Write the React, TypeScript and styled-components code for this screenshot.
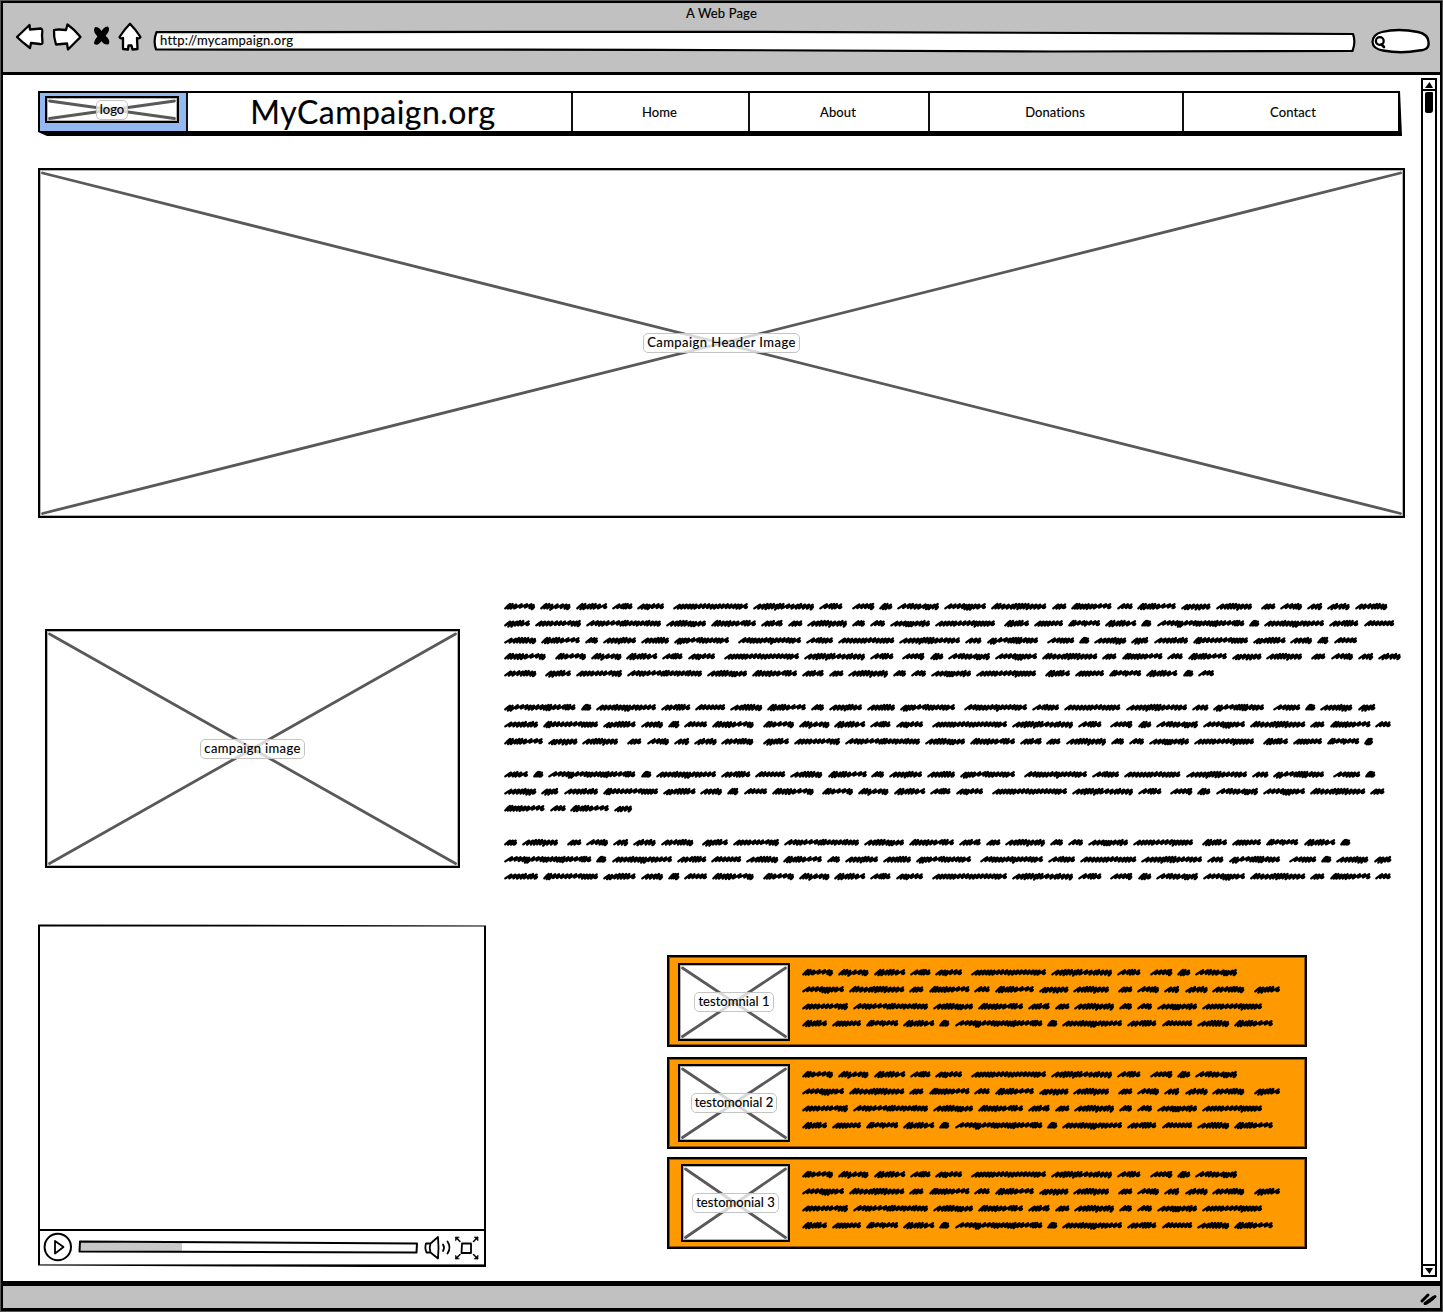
import React from "react";
import styled, { createGlobalStyle } from "styled-components";

const Global = createGlobalStyle`
  *, *::before, *::after { box-sizing: border-box; }
  body { margin: 0; background: #fff; color: #000; font-family: Lato, "Open Sans", sans-serif; -webkit-text-stroke: 0.15px #000; }
  svg { display: block; overflow: visible; flex: none; }
`;

/* ---------- browser window ---------- */

const Window = styled.div`
  width: 1443px;
  height: 1312px;
  padding: 1px;
  background: #555;
`;
const Frame = styled.div`
  height: 1310px;
  display: flex;
  flex-direction: column;
  border: 2px solid #000;
  border-bottom-width: 3px;
  background: #fff;
`;
const TopBar = styled.header`
  height: 72px;
  background: #c1c1c1;
  border-bottom: 3px solid #000;
`;
const WindowTitle = styled.div`
  height: 20px;
  text-align: center;
  font-size: 13px;
  line-height: 20px;
  letter-spacing: 0.15px;
`;
const Toolbar = styled.div`
  display: flex;
  align-items: flex-start;
  height: 32px;
  padding-left: 13px;
`;
const Address = styled.div`
  position: relative;
  width: 1203px;
  height: 21px;
  margin: 8px 14px 0 11px;
  padding-left: 7px;
  font-size: 13px;
  line-height: 19px;
  letter-spacing: 0.22px;
  svg { position: absolute; left: 0; top: 0; }
  span { position: relative; }
`;
const StatusBar = styled.footer`
  height: 27px;
  display: flex;
  justify-content: flex-end;
  background: #c1c1c1;
  border-top: 5px solid #000;
  padding: 7px 3px 0 0;
`;
const Body = styled.div`
  display: flex;
  flex: 1;
  min-height: 0;
`;
const Main = styled.main`
  width: 1418px;
  padding: 16px 0 0 35px;
`;
const ScrollTrack = styled.div`
  width: 16px;
  height: 1199px;
  margin-top: 3px;
  display: flex;
  flex-direction: column;
  align-items: center;
  border: 2px solid #000;
`;
const ScrollButton = styled.div<{ $down?: boolean }>`
  width: 12px;
  height: 11px;
  display: flex;
  align-items: center;
  justify-content: center;
  border: 0 solid #000;
  border-width: ${(p) => (p.$down ? "2px 0 0" : "0 0 2px")};
  margin-top: ${(p) => (p.$down ? "auto" : "0")};
`;
const ScrollThumb = styled.div`
  width: 8px;
  height: 21px;
  margin-top: 1px;
  border-radius: 2px 1px 3px 2px;
  background: #000;
`;

/* ---------- page ---------- */

const Nav = styled.nav`
  display: flex;
  width: 1364px;
  height: 45px;
  border: solid #000;
  border-width: 2px 4px 5px 2px;
  clip-path: polygon(0 0, 1362px 0, 1364px 45px, 9px 45px, 0 41px);
`;
const NavCell = styled.a<{ $w: number }>`
  width: ${(p) => p.$w}px;
  display: flex;
  align-items: center;
  justify-content: center;
  border-right: 2px solid #111;
  font-size: 13px;
  letter-spacing: 0.1px;
  padding-right: 2px;
  &:last-child { border-right: 0; padding: 0 0 0 4px; }
`;
const LogoCell = styled(NavCell)`
  background: #94b9f1;
  justify-content: flex-start;
  align-items: flex-start;
  padding: 3px 0 0 5px;
`;
const SiteName = styled(NavCell)`
  font-size: 32px;
  letter-spacing: 0.45px;
  padding-right: 13px;
  padding-bottom: 2px;
`;
const Placeholder = styled.div<{ $w: number; $h: number }>`
  position: relative;
  flex: none;
  width: ${(p) => p.$w}px;
  height: ${(p) => p.$h}px;
  display: flex;
  align-items: center;
  justify-content: center;
  border: 2px solid #000;
  box-shadow: inset 0 0 0 1px rgba(0, 0, 0, 0.3);
  background: #fff;
  > svg { position: absolute; left: 0; top: 0; }
`;
const Tag = styled.span<{ $spacing: number }>`
  position: relative;
  height: 20px;
  padding: 0 3px;
  border: 1px solid #c4c4c4;
  border-radius: 5px;
  background: rgba(255, 255, 255, 0.76);
  font-size: 13px;
  line-height: 17px;
  letter-spacing: ${(p) => p.$spacing}px;
  white-space: nowrap;
`;
const HeroWrap = styled.section`
  margin-top: 32px;
`;
const Story = styled.section`
  display: flex;
  margin-top: 80px;
  padding-left: 7px;
`;
const StoryImage = styled.div`
  margin: 31px 44px 0 0;
`;
const Paragraph = styled.div`
  margin-bottom: 16.9px;
`;
const Line = styled.div`
  display: flex;
  align-items: center;
  height: 16.85px;
`;
const Lower = styled.section`
  display: flex;
  align-items: flex-start;
  margin-top: 23px;
`;
const Video = styled.div`
  width: 448px;
  height: 343px;
  display: flex;
  flex-direction: column;
  border: 2px solid #000;
  clip-path: polygon(0 0, 100% 1px, 100% 100%, 200px 342px, 0 341px);
  box-shadow: inset 0 -1px 0 rgba(0, 0, 0, 0.6), inset 0 1px 0 rgba(0, 0, 0, 0.5);
`;
const Screen = styled.div`
  flex: 1;
`;
const Controls = styled.div`
  height: 36px;
  display: flex;
  align-items: center;
  border-top: 2px solid #000;
  padding-left: 4px;
`;
const Testimonials = styled.div`
  margin: 31px 0 0 181px;
  display: flex;
  flex-direction: column;
`;
const Testimonial = styled.article<{ $gap: number }>`
  width: 640px;
  height: 92px;
  margin-bottom: ${(p) => p.$gap}px;
  display: flex;
  border: 2px solid #000;
  box-shadow: inset 0 0 0 1px rgba(0, 0, 0, 0.45);
  background: #ff9900;
`;
const Portrait = styled.div<{ $left: number; $top: number }>`
  width: 133px;
  padding: ${(p) => p.$top}px 0 0 ${(p) => p.$left}px;
`;
const Quote = styled.div`
  padding-top: 7px;
`;

/* ---------- scribbled text ---------- */

const ADVANCE: Record<string, number> = {
  Lorem: 36, ipsum: 35.5, dolor: 36.3, sit: 25.5, "amet,": 36, consectetur: 80, adipiscing: 66,
  "elit,": 32.4, sed: 27.4, do: 18.3, eiusmod: 47, tempor: 47, incididunt: 60.3, ut: 19.4,
  labore: 45.5, et: 20.7, dolore: 43.8, magna: 34.5, "aliqua.": 45, Ut: 19.3, enim: 27, ad: 20.2,
  minim: 27.7, "veniam,": 41.3, quis: 30.9, nostrud: 51, exercitation: 80, ullamco: 45,
  laboris: 50, nisi: 26.7, aliquip: 45, ex: 18, ea: 20, commodo: 45, "consequat.": 69, Duis: 30,
  aute: 34, irure: 37.2, in: 15.3, reprehenderit: 92.3, voluptate: 65, velit: 34.3, esse: 35.2,
  cillum: 37.2, eu: 18, fugiat: 38, nulla: 33, "pariatur.": 64, Excepteur: 68, sint: 32,
  occaecat: 61.3, cupidatat: 66, non: 21.4, "proident,": 60, sunt: 32.2, culpa: 37.3, qui: 22.3,
  officia: 39, deserunt: 60, mollit: 37.6, anim: 27, id: 16.4, est: 28, "laborum.": 50.7,
  re: 21, prehenderit: 76.5, d: 14, olor: 29, mag: 23, na: 18,
};

const STORY: string[][] = [
  [
    "Lorem ipsum dolor sit amet, consectetur adipiscing elit, sed do eiusmod tempor incididunt ut labore et dolore magna aliqua. Ut enim ad minim veniam,",
    "quis nostrud exercitation ullamco laboris nisi ut aliquip ex ea commodo consequat. Duis aute irure dolor in reprehenderit in voluptate velit esse",
    "cillum dolore eu fugiat nulla pariatur. Excepteur sint occaecat cupidatat non proident, sunt in culpa qui officia deserunt mollit anim id est",
    "laborum. Lorem ipsum dolor sit amet, consectetur adipiscing elit, sed do eiusmod tempor incididunt ut labore et dolore magna aliqua. Ut enim ad minim",
    "veniam, quis nostrud exercitation ullamco laboris nisi ut aliquip ex ea commodo consequat. Duis aute irure dolor in re",
  ],
  [
    "prehenderit in voluptate velit esse cillum dolore eu fugiat nulla pariatur. Excepteur sint occaecat cupidatat non proident, sunt in culpa qui",
    "officia deserunt mollit anim id est laborum. Lorem ipsum dolor sit amet, consectetur adipiscing elit, sed do eiusmod tempor incididunt ut labore et",
    "dolore magna aliqua. Ut enim ad minim veniam, quis nostrud exercitation ullamco laboris nisi ut aliquip ex ea commodo consequat. Duis aute irure d",
  ],
  [
    "olor in reprehenderit in voluptate velit esse cillum dolore eu fugiat nulla pariatur. Excepteur sint occaecat cupidatat non proident, sunt in",
    "culpa qui officia deserunt mollit anim id est laborum. Lorem ipsum dolor sit amet, consectetur adipiscing elit, sed do eiusmod tempor incididunt ut",
    "labore et dolore mag",
  ],
  [
    "na aliqua. Ut enim ad minim veniam, quis nostrud exercitation ullamco laboris nisi ut aliquip ex ea commodo consequat. Duis aute irure dolor in",
    "reprehenderit in voluptate velit esse cillum dolore eu fugiat nulla pariatur. Excepteur sint occaecat cupidatat non proident, sunt in culpa qui",
    "officia deserunt mollit anim id est laborum. Lorem ipsum dolor sit amet, consectetur adipiscing elit, sed do eiusmod tempor incididunt ut labore et",
  ],
];

const QUOTE = [
  "Lorem ipsum dolor sit amet, consectetur adipiscing elit, sed do eiusmod",
  "tempor incididunt ut labore et dolore magna aliqua. Ut enim ad minim veniam, quis",
  "nostrud exercitation ullamco laboris nisi ut aliquip ex ea commodo consequat.",
  "Duis aute irure dolor in reprehenderit in voluptate velit esse cillum dolore",
];

/* Shape each letter tends toward: relative step, top and bottom of its strokes. */
const LETTER: Record<string, [number, number, number]> = {
  i: [0.8, 3, 7.4], l: [0.8, 3, 7.6], j: [0.8, 3, 8], t: [1.2, 3.4, 7],
  r: [1.6, 3.2, 6.6], s: [1.4, 3.4, 7], e: [1.3, 3.2, 7], c: [1.1, 3.8, 7.6],
  m: [0.7, 4, 8.2], d: [0.8, 3, 8.2], b: [0.9, 3.2, 8], p: [0.8, 3.8, 8.6],
  q: [0.8, 3.6, 8.6], g: [0.9, 3.8, 8.4], o: [1.1, 3.6, 7.4],
};

function Word({ text }: { text: string }) {
  const adv = ADVANCE[text] ?? text.length * 7;
  const width = adv - (/[.,]$/.test(text) ? 8.8 : 4.8);
  const letters = text.replace(/[.,]/g, "").toLowerCase().split("");
  const count = Math.max(3, Math.round((width - 4) / 3.7));
  const marks = Array.from({ length: count }, (_, i) => {
    const ch = letters[Math.floor((i * letters.length) / count)];
    return LETTER[ch] ?? [1, 3.6, 7.6];
  });
  const total = marks.reduce((s, m) => s + m[0], 0);
  const unit = (width - 4.8) / total;
  let x = 1.3;
  let d = `M${x} 7.4`;
  marks.forEach(([step, top, low]) => {
    const w = step * unit;
    const tx = x + w + 2;
    d += `Q${(tx - 1.8).toFixed(1)} ${(top + 1).toFixed(1)} ${tx.toFixed(1)} ${top}L${(x + w).toFixed(1)} ${low}`;
    x += w;
  });
  d += `Q${(x + 1.4).toFixed(1)} 7.6 ${(width - 1.2).toFixed(1)} 6`;
  return (
    <svg width={adv} height={11}>
      <path d={d} fill="none" stroke="#000" strokeWidth={2.3} strokeLinecap="round" strokeLinejoin="round" />
    </svg>
  );
}

const Scribble = ({ line }: { line: string }) => (
  <Line>
    {line.split(" ").map((w, i) => (
      <Word key={i} text={w} />
    ))}
  </Line>
);

/* ---------- drawings ---------- */

const ink = { stroke: "#000", strokeLinejoin: "round" as const, strokeLinecap: "round" as const };

const ToolbarIcons = () => (
  <svg width={126} height={30} fill="#fff" strokeWidth={2.3} {...ink}>
    <path d="M1 14L13.500 2L14 6.500L25 5.500Q27 6 26 12L26.500 20Q26 21.500 24 21L15 20L14 25Q6 19 1 14Z" />
    <path d="M38 7Q42 6 50 7L51.500 1.500Q58 6 64.500 14L52 26.500L51 20.500L40 21.500Q37.500 14 38 7Z" />
    <path d="M79.500 5Q83 5 85.500 10Q88 5 91.500 4.500Q94 6 88.500 13Q94 18 92 20.500Q88 21 85.500 16.500Q82 22 79 20.500Q78.500 18 82.500 13.500Q77.500 8 79.500 5Z" fill="#000" strokeWidth={1.8} />
    <path d="M114 .8Q120 7 124.500 14Q123.500 16 121 15L121.500 26L116.500 26.500L115.500 22.500L112.500 22.500L112 26.500L107 26L107 15Q104 16 103.500 14Q108 7 114 .8Z" />
  </svg>
);

const AddressOutline = () => (
  <svg width={1203} height={21} fill="#fff" strokeWidth={2.2} {...ink}>
    <path d="M3.500 1.200L600 .8L1200 3Q1203 11 1199.500 20L900 20.500L500 18.800L3 18.500Q0 10 3.500 1.200Z" />
  </svg>
);

const SearchField = () => (
  <svg width={60} height={25} strokeWidth={2.3} fill="#fff" {...ink}>
    <path d="M12 9Q28 5 48 9Q58 11 58.500 19Q60 27 49 27.500Q31 31 13 27.500Q3 26 2.500 19Q3 11 12 9Z" />
    <circle cx="9.800" cy="18" r="3.900" />
    <path d="M11.500 21.500L14 24" strokeWidth={2.600} />
  </svg>
);

function Cross({ w, h }: { w: number; h: number }) {
  return (
    <svg width={w - 4} height={h - 4} fill="none" stroke="#595959" strokeWidth={2.8} strokeLinecap="round">
      <path d={`M2.500 3L${w - 6.5} ${h - 6.5}M${w - 6.5} 3L2.500 ${h - 6.5}`} />
    </svg>
  );
}

type ImageBoxProps = { w: number; h: number; label: string; spacing?: number };

const ImageBox = ({ w, h, label, spacing = 0.05 }: ImageBoxProps) => (
  <Placeholder $w={w} $h={h}>
    <Cross w={w} h={h} />
    <Tag $spacing={spacing}>{label}</Tag>
  </Placeholder>
);

const PlayerControls = () => (
  <svg width={440} height={33} fill="none" strokeWidth={2} {...ink}>
    <circle cx="13.800" cy="15" r="13.200" />
    <path d="M11 9L19.500 15L11 21.500Z" strokeWidth={1.8} />
    <path d="M36 10L138 11L138 20L36 20Z" fill="#c8c8c8" stroke="none" />
    <path d="M36 9.500L373 11.500L372.500 20.500L35.500 19.500Z" />
    <path d="M382 11.500Q380.500 15.500 382.500 20.500H386.500Q385 15.500 386.500 11.500ZM386.500 11.500L394 5Q395 15.500 394 26.500L386.500 20.500" strokeWidth={1.8} />
    <path d="M399 12.500Q401 15.500 399 19M403.500 9.500Q407.500 15.500 403.500 21.500" strokeWidth={1.8} />
    <path d="M418 11.500H427V21H417.500Z" strokeWidth={1.8} />
    <path d="M412 5.500L416 9.500M433.500 5.500L429.500 9.500M412 26.500L416 22.500M433.500 26.500L429.500 22.500" strokeWidth={1.5} />
    <path d="M411.500 8.500L411.500 5L415 5ZM430.500 5H434V8.500ZM411.500 23.500V27H415ZM430.500 27H434V23.500Z" strokeWidth={0.6} fill="#000" />
  </svg>
);

export default function App() {
  return (
    <>
      <Global />
      <Window>
        <Frame>
          <TopBar>
            <WindowTitle>A Web Page</WindowTitle>
            <Toolbar>
              <ToolbarIcons />
              <Address>
                <AddressOutline />
                <span>http://mycampaign.org</span>
              </Address>
              <SearchField />
            </Toolbar>
          </TopBar>
          <Body>
            <Main>
              <Nav>
                <LogoCell $w={148}>
                  <ImageBox w={134} h={27} label="logo" spacing={0} />
                </LogoCell>
                <SiteName $w={385}>MyCampaign.org</SiteName>
                <NavCell $w={177}>Home</NavCell>
                <NavCell $w={180}>About</NavCell>
                <NavCell $w={254}>Donations</NavCell>
                <NavCell $w={214}>Contact</NavCell>
              </Nav>
              <HeroWrap>
                <ImageBox w={1367} h={350} label="Campaign Header Image" spacing={0.45} />
              </HeroWrap>
              <Story>
                <StoryImage>
                  <ImageBox w={415} h={239} label="campaign image" spacing={0.35} />
                </StoryImage>
                <div>
                  {STORY.map((lines, i) => (
                    <Paragraph key={i}>
                      {lines.map((l, j) => (
                        <Scribble key={j} line={l} />
                      ))}
                    </Paragraph>
                  ))}
                </div>
              </Story>
              <Lower>
                <Video>
                  <Screen />
                  <Controls>
                    <PlayerControls />
                  </Controls>
                </Video>
                <Testimonials>
                  {[
                    { label: "testomnial 1", w: 112, left: 9, top: 6, gap: 10 },
                    { label: "testomonial 2", w: 112, left: 9, top: 5, gap: 8 },
                    { label: "testomonial 3", w: 109, left: 12, top: 5, gap: 0 },
                  ].map((t) => (
                    <Testimonial key={t.label} $gap={t.gap}>
                      <Portrait $left={t.left} $top={t.top}>
                        <ImageBox w={t.w} h={78} label={t.label} />
                      </Portrait>
                      <Quote>
                        {QUOTE.map((l) => (
                          <Scribble key={l} line={l} />
                        ))}
                      </Quote>
                    </Testimonial>
                  ))}
                </Testimonials>
              </Lower>
            </Main>
            <ScrollTrack>
              <ScrollButton>
                <svg width={8} height={6}>
                  <path d="M4.500 0L8 6H0Z" />
                </svg>
              </ScrollButton>
              <ScrollThumb />
              <ScrollButton $down>
                <svg width={8} height={6}>
                  <path d="M0 0H8L4.500 6Z" />
                </svg>
              </ScrollButton>
            </ScrollTrack>
          </Body>
          <StatusBar>
            <svg width={17} height={12} fill="none" strokeWidth={3} {...ink}>
              <path d="M2 8L8 2M5.500 10.500Q9 9.500 15 3.500M5 10.500L14 4" />
            </svg>
          </StatusBar>
        </Frame>
      </Window>
    </>
  );
}
